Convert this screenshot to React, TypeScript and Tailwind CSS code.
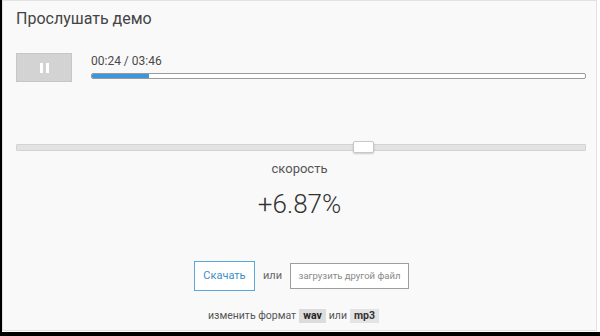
import React from "react";

export default function App() {
  return (
    <div className="w-[600px] h-[336px] bg-black flex" style={{ fontFamily: "Roboto, 'Open Sans', Arial, sans-serif" }}>
      <div className="ml-[2px] w-[598px] h-[332px] bg-white flex">
        <div className="w-[595px] h-[331px] bg-[#f9f9f9] border border-[#e2e2e2] flex flex-col">
          <div className="pl-[13px] pt-[8px] text-[16px] leading-[20px] text-[#444]">Прослушать демо</div>
          <div className="flex mt-[24px] pl-[13px]">
            <div className="w-[56px] h-[29px] bg-[#d3d3d3] border border-[#c6c6c6] flex items-center justify-center gap-[3px]">
              <div className="w-[3px] h-[10px] bg-white" />
              <div className="w-[3px] h-[10px] bg-white" />
            </div>
            <div className="flex flex-col ml-[19px] w-[495px]">
              <div className="text-[12px] leading-[16px] text-[#4a4a4a]">00:24 / 03:46</div>
              <div className="mt-[4px] h-[6px] w-full rounded-[2px] border border-[#9a9a9a] bg-white overflow-hidden flex">
                <div className="h-full w-[57px] bg-[#3d97dc]" />
              </div>
            </div>
          </div>
          <div className="mt-[59px] ml-[13px] mr-[10px] h-[12px] flex items-center relative">
            <div className="w-full h-[7px] bg-[#e3e3e3] border border-[#d3d3d3] rounded-[1px]" />
            <div className="absolute left-[337px] top-0 w-[21px] h-[12px] bg-white border border-[#c8c8c8] rounded-[2px] shadow-[0_1px_2px_rgba(0,0,0,0.2)]" />
          </div>
          <div className="mt-[8px] text-center text-[13px] leading-[16px] text-[#555]">скорость</div>
          <div className="mt-[11px] text-center text-[26px] leading-[32px] font-light text-[#333]">+6.87%</div>
          <div className="mt-[41px] flex items-center justify-center pl-[4px]">
            <div className="w-[61px] h-[30px] border border-[#5aa8d8] bg-white flex items-center justify-center text-[11px] text-[#3b8ec4]">Скачать</div>
            <div className="ml-[8px] mr-[8px] text-[11px] text-[#666]">или</div>
            <div className="w-[119px] h-[26px] border border-[#9e9e9e] bg-white flex items-center justify-center whitespace-nowrap text-[9.5px] text-[#888]">загрузить другой файл</div>
          </div>
          <div className="mt-[17px] flex items-center justify-center text-[10.5px] text-[#555] pr-[12px]">
            <span>изменить формат</span>
            <span className="ml-[3px] px-[4px] h-[14px] leading-[14px] bg-[#dcdcdc] font-bold text-[#222]">wav</span>
            <span className="mx-[3px]">или</span>
            <span className="px-[4px] h-[14px] leading-[14px] bg-[#e4e4e4] font-bold text-[#333]">mp3</span>
          </div>
        </div>
      </div>
    </div>
  );
}
